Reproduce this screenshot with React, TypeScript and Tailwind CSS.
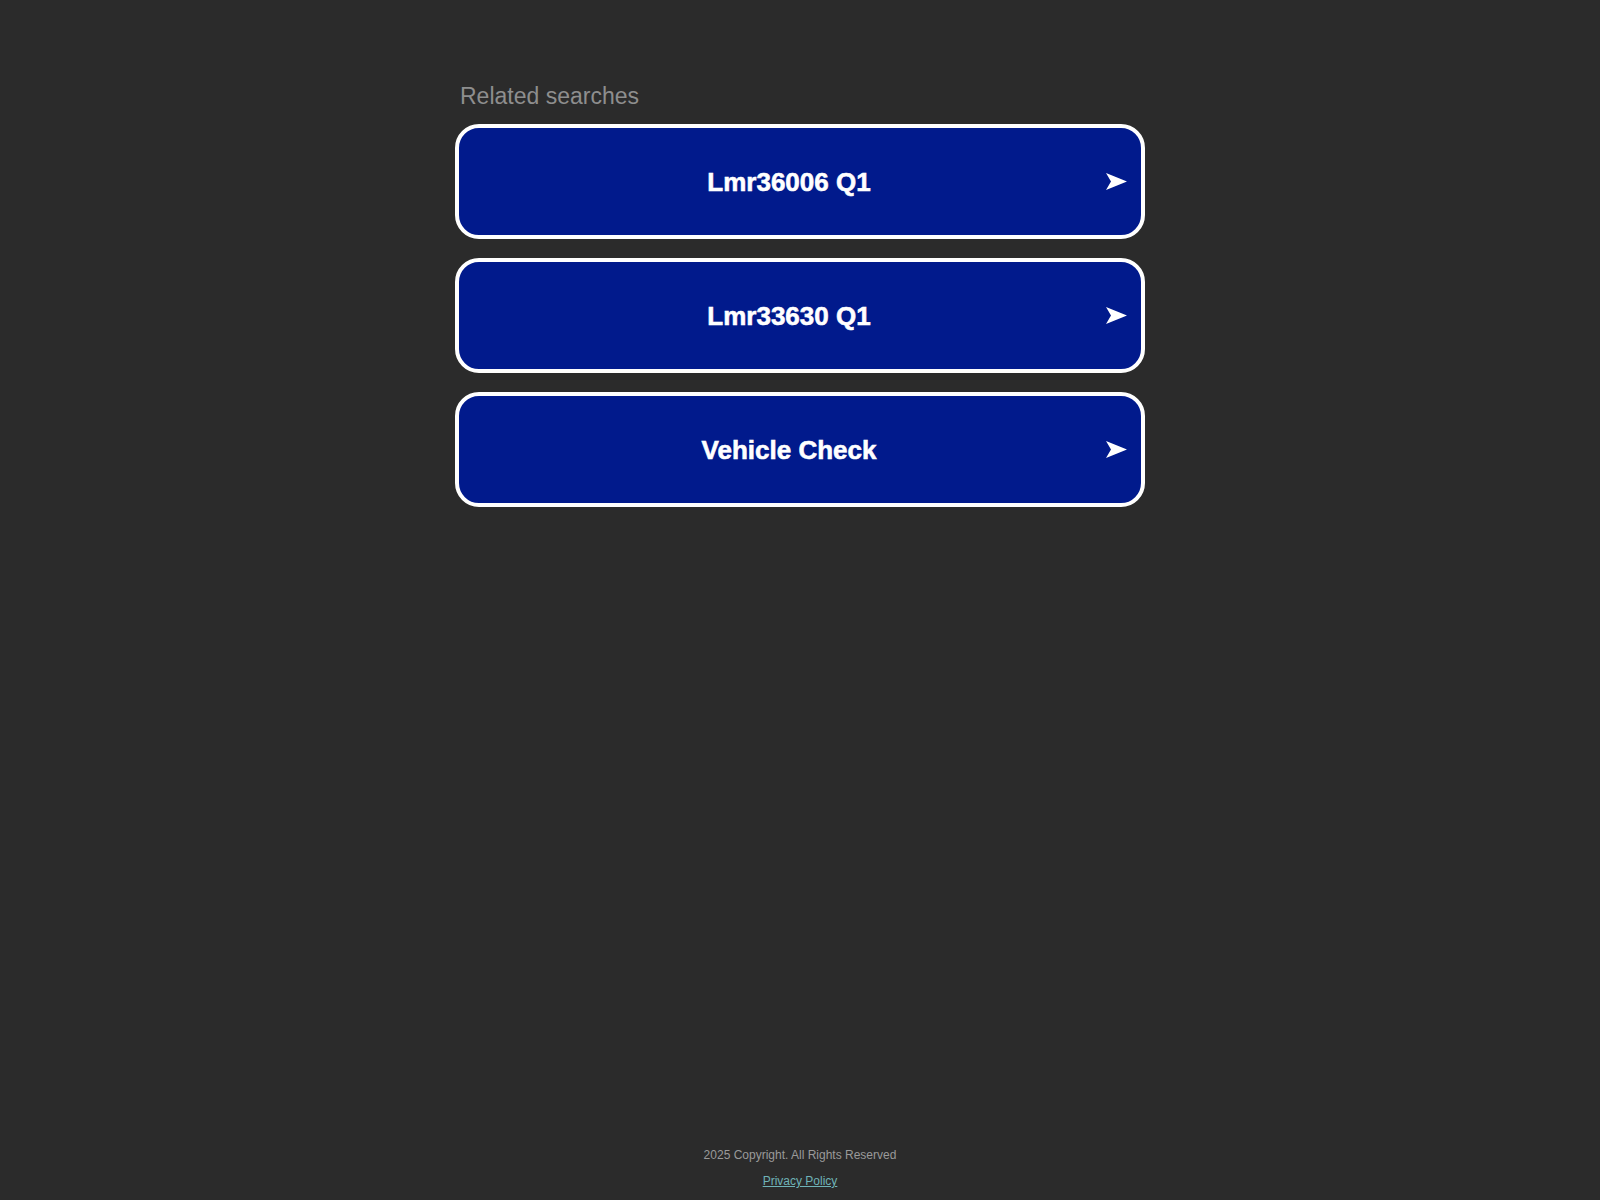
const searches = ['Lmr36006 Q1', 'Lmr33630 Q1', 'Vehicle Check'];

function ArrowHead() {
  return (
    <svg viewBox="0 0 21 17" className="h-[17px] w-[21px] shrink-0" aria-hidden="true">
      <polygon points="0,0 21,8.5 0,17 5,8.5" fill="#ffffff" />
    </svg>
  );
}

function SearchLink({ label }: { label: string }) {
  return (
    <a
      href="#"
      className="flex h-[115px] w-full items-center rounded-[24px] border-4 border-white bg-[#011a8c] text-white"
    >
      <span className="flex-1 pl-[13px] text-center text-[26px] font-bold leading-none [-webkit-text-stroke:0.6px_white]">
        {label}
      </span>
      <span className="mr-[14px] flex items-center">
        <ArrowHead />
      </span>
    </a>
  );
}

export default function App() {
  return (
    <div
      className="flex min-h-screen flex-col bg-[#2b2b2b]"
      style={{ fontFamily: '"Liberation Sans", Arial, sans-serif' }}
    >
      <main className="mx-auto w-[690px] flex-1 pt-[82px]">
        <h2 className="pl-[5px] text-[23px] leading-[28px] text-[#8e8e8e]">Related searches</h2>
        <div className="mt-[14px] flex flex-col gap-[19px]">
          {searches.map((s) => (
            <SearchLink key={s} label={s} />
          ))}
        </div>
      </main>

      <footer className="flex flex-col items-center pb-[12px] text-[12px] leading-[14px]">
        <p className="text-[#9a9a9a]">2025 Copyright. All Rights Reserved</p>
        <a href="#" className="mt-[12px] text-[#6fb3b8] underline">
          Privacy Policy
        </a>
      </footer>
    </div>
  );
}
